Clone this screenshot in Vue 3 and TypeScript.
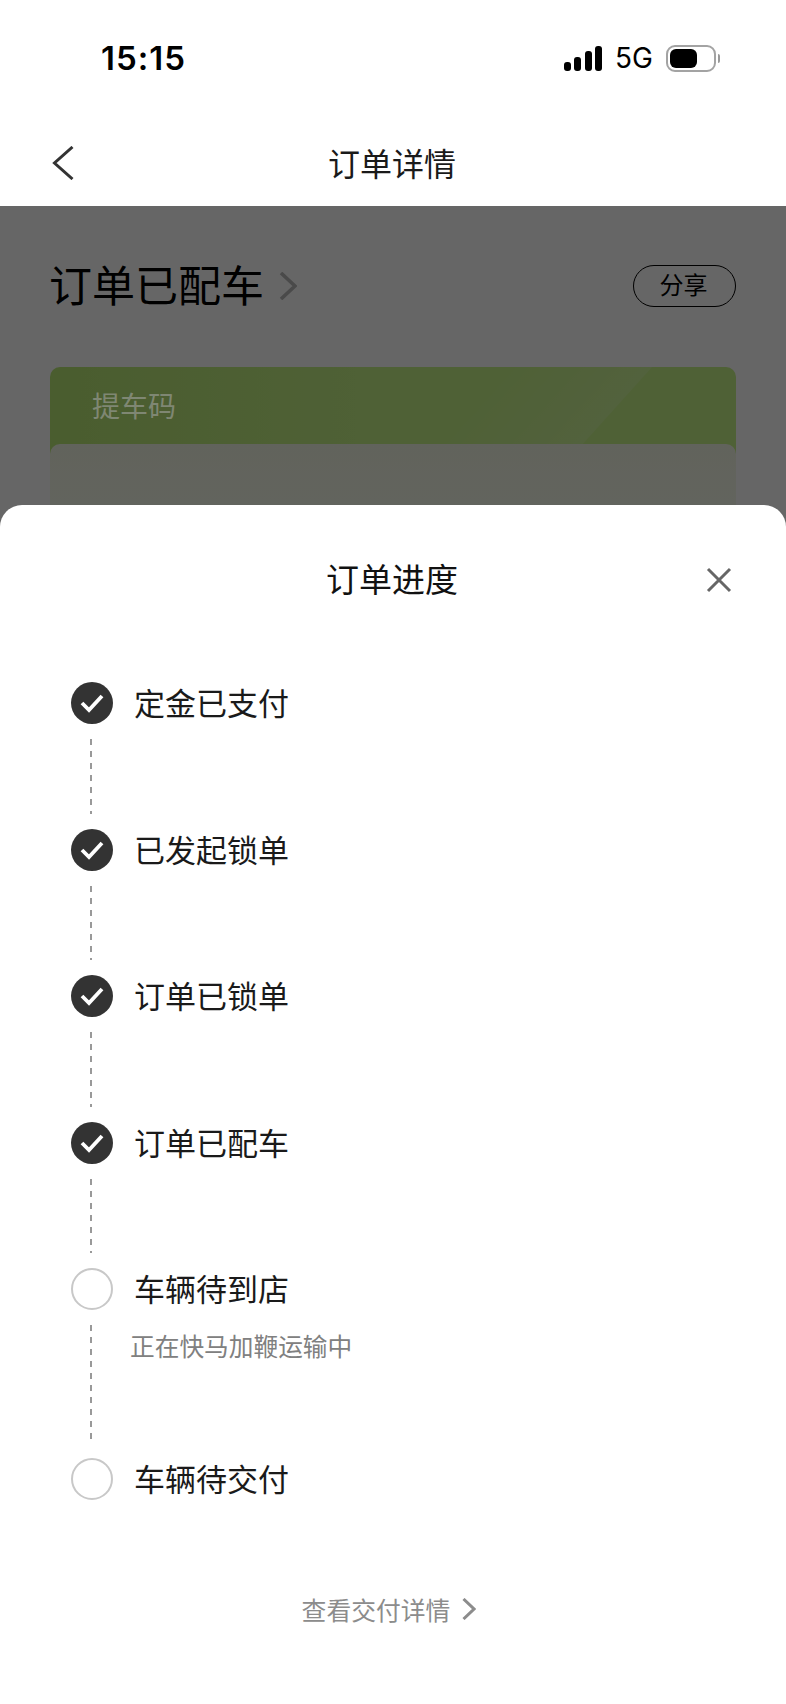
<template>
  <div class="page">
    <div class="status">
      <span class="status__time">15:15</span>
      <div class="status__right">
        <div class="signal">
          <i v-for="h in signalBars" :key="h" :style="{ height: h + 'px' }"></i>
        </div>
        <span class="status__net">5G</span>
        <div class="battery"><div class="battery__level"></div></div>
        <div class="battery__nub"></div>
      </div>
    </div>

    <div class="nav">
      <svg class="nav__back" width="22" height="34" viewBox="0 0 22 34">
        <path d="M20.5 1 L2.5 17 L20.5 33" fill="none" stroke="#333" stroke-width="3" />
      </svg>
      <h1 class="nav__title">订单详情</h1>
      <span></span>
    </div>

    <div class="behind">
      <div class="headline">
        <span class="headline__text">订单已配车</span>
        <svg width="18" height="28" viewBox="0 0 18 28">
          <path d="M2 1 L16 14 L2 27" fill="none" stroke="#b8b8b8" stroke-width="3.6" />
        </svg>
        <button class="share">分享</button>
      </div>

      <div class="code-card">
        <div class="code-card__label">提车码</div>
        <div class="code-card__inner"></div>
      </div>

      <div class="mask"></div>
    </div>

    <div class="sheet">
      <div class="sheet__head">
        <span></span>
        <h2 class="sheet__title">订单进度</h2>
        <svg class="sheet__close" width="26" height="26" viewBox="0 0 26 26">
          <path d="M2 2 L24 24 M24 2 L2 24" fill="none" stroke="#666" stroke-width="3" />
        </svg>
      </div>

      <div class="steps">
        <div v-for="(step, i) in steps" :key="step.label" class="step">
          <div class="step__rail">
            <div class="dot" :class="{ 'dot--done': step.done }">
              <svg v-if="step.done" width="24" height="20" viewBox="0 0 24 20">
                <path d="M2 10 L9 17 L22 3" fill="none" stroke="#fff" stroke-width="3.8" />
              </svg>
            </div>
            <div v-if="i < steps.length - 1" class="step__line"></div>
          </div>
          <div class="step__body">
            <div class="step__label">{{ step.label }}</div>
            <div v-if="step.note" class="step__note">{{ step.note }}</div>
          </div>
        </div>
      </div>

      <div class="more">
        <span>查看交付详情</span>
        <svg width="14" height="22" viewBox="0 0 14 22">
          <path d="M1.5 1 L12 11 L1.5 21" fill="none" stroke="#8c8c8c" stroke-width="3" />
        </svg>
      </div>
    </div>
  </div>
</template>

<script setup lang="ts">
interface Step {
  label: string
  done: boolean
  note?: string
}

const signalBars = [9, 14, 20, 25]

const steps: Step[] = [
  { label: '定金已支付', done: true },
  { label: '已发起锁单', done: true },
  { label: '订单已锁单', done: true },
  { label: '订单已配车', done: true },
  { label: '车辆待到店', done: false, note: '正在快马加鞭运输中' },
  { label: '车辆待交付', done: false }
]
</script>

<style>
body {
  margin: 0;
  background: #fff;
}
</style>

<style scoped>
.page {
  position: relative;
  width: 786px;
  height: 1704px;
  overflow: hidden;
  background: #fff;
  color: #1a1a1a;
  font-family: "Noto Sans CJK SC", "Noto Sans", sans-serif;
}

h1,
h2 {
  margin: 0;
  font-weight: 400;
}

.status {
  display: flex;
  align-items: center;
  justify-content: space-between;
  height: 116px;
  padding: 0 66px 0 101px;
  box-sizing: border-box;
}

.status__time {
  font-family: Inter, sans-serif;
  font-size: 33px;
  font-weight: 600;
  letter-spacing: 1px;
  color: #000;
}

.status__right {
  display: flex;
  align-items: center;
}

.signal {
  display: flex;
  align-items: flex-end;
  gap: 3.5px;
  height: 25px;
  margin-right: 13px;
}

.signal i {
  display: block;
  width: 7px;
  border-radius: 3px;
  background: #000;
}

.status__net {
  margin-right: 13px;
  font-family: Inter, sans-serif;
  font-size: 28px;
  color: #000;
}

.battery {
  display: flex;
  align-items: center;
  width: 50px;
  height: 27px;
  padding: 0 2px;
  box-sizing: border-box;
  border: 2px solid #a3a3a3;
  border-radius: 9px;
}

.battery__level {
  width: 27px;
  height: 19px;
  border-radius: 6px;
  background: #000;
}

.battery__nub {
  width: 2px;
  height: 9px;
  margin-left: 2px;
  border-radius: 0 2px 2px 0;
  background: #999;
}

.nav {
  display: grid;
  grid-template-columns: 1fr auto 1fr;
  align-items: center;
  height: 90px;
  padding: 0 51px;
}

.nav__back {
  margin: 3px 0 0 1px;
}

.nav__title {
  padding: 2px 2px 0 0;
  font-size: 32px;
  line-height: 44px;
  color: #1a1a1a;
}

.behind {
  position: relative;
  height: 330px;
  padding: 59px 50px 0;
  box-sizing: border-box;
  overflow: hidden;
}

.headline {
  display: flex;
  align-items: center;
  gap: 15px;
  height: 42px;
}

.headline__text {
  margin-left: -1px;
  padding-bottom: 6px;
  font-size: 43px;
  line-height: 42px;
  color: #000;
}

.share {
  width: 103px;
  height: 42px;
  margin-left: auto;
  padding: 0 2px 5px 0;
  border: 1.5px solid #000;
  border-radius: 21px;
  background: transparent;
  color: #000;
  font-family: inherit;
  font-size: 24px;
}

.code-card {
  height: 300px;
  margin-top: 60px;
  border-radius: 10px;
  background:
    linear-gradient(132deg, transparent 337px, rgba(255, 255, 255, 0.15) 447px, transparent 448px),
    linear-gradient(90deg, #b9e875, #c5f287 45%);
  overflow: hidden;
}

.code-card__label {
  position: relative;
  z-index: 1;
  height: 77px;
  padding: 18px 0 0 42px;
  box-sizing: border-box;
  font-size: 28px;
  line-height: 40px;
  color: #7f8773;
}

.code-card__inner {
  height: 100%;
  border-radius: 10px;
  background: linear-gradient(180deg, #f3f8e6, #f6f9ea 61px);
}

.mask {
  position: absolute;
  inset: 0;
  background: rgba(0, 0, 0, 0.6);
}

.sheet {
  position: absolute;
  left: 0;
  right: 0;
  top: 505px;
  bottom: 0;
  padding-top: 51px;
  border-radius: 22px 22px 0 0;
  background: #fff;
}

.sheet__head {
  display: grid;
  grid-template-columns: 1fr auto 1fr;
  align-items: center;
  height: 44px;
}

.sheet__title {
  padding-right: 2px;
  font-size: 33px;
  line-height: 44px;
  color: #111;
}

.sheet__close {
  justify-self: end;
  margin-right: 54px;
  transform: translateY(2px);
}

.steps {
  margin-top: 82px;
  padding-left: 71px;
}

.step {
  display: flex;
  gap: 21px;
}

.step__rail {
  display: flex;
  flex-direction: column;
  align-items: center;
  width: 42px;
}

.dot {
  display: flex;
  align-items: center;
  justify-content: center;
  flex: none;
  width: 42px;
  height: 42px;
  box-sizing: border-box;
  border: 2px solid #c8c8c8;
  border-radius: 50%;
}

.dot--done {
  border: none;
  background: #333;
}

.step__line {
  flex: 1;
  width: 2px;
  margin: 15px 2px 15px 0;
  background: repeating-linear-gradient(180deg, #999 0 6px, transparent 6px 12px);
}

.step__body {
  padding-bottom: 104.5px;
}

.step:last-child .step__body {
  padding-bottom: 0;
}

.step__label {
  margin-top: -1px;
  margin-bottom: 1px;
  font-size: 31px;
  line-height: 42px;
  color: #1a1a1a;
}

.step__note {
  margin: 19px 0 -8.5px -4px;
  font-size: 24.7px;
  line-height: 34px;
  color: #808080;
}

.more {
  display: flex;
  align-items: center;
  justify-content: center;
  gap: 12px;
  margin-top: 92px;
  padding-right: 8px;
  font-size: 24.8px;
  line-height: 34px;
  color: #8c8c8c;
}
</style>
